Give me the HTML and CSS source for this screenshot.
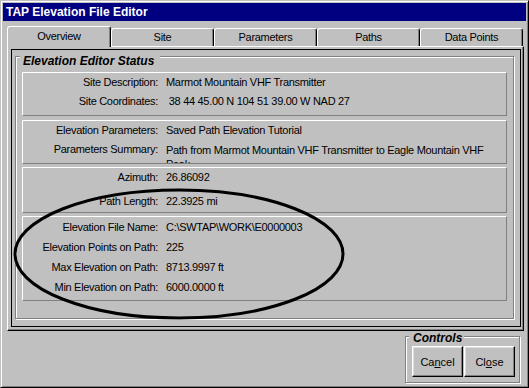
FILE: index.html
```html
<!DOCTYPE html>
<html>
<head>
<title>TAP Elevation File Editor</title>
<link rel="stylesheet" href="styles.css">
</head>
<body>
<div class="window">
  <div class="titlebar">TAP Elevation File Editor</div>

  <div class="tabs">
    <div class="tab active">Overview</div>
    <div class="tab">Site</div>
    <div class="tab">Parameters</div>
    <div class="tab">Paths</div>
    <div class="tab">Data Points</div>
  </div>

  <div class="page">
    <div class="inner">
      <div class="group status">
        <div class="caption">Elevation Editor Status</div>

        <div class="panel">
          <span class="label">Site Description:</span>
          <span class="value">Marmot Mountain VHF Transmitter</span>
          <span class="label">Site Coordinates:</span>
          <span class="value"> 38 44 45.00 N 104 51 39.00 W NAD 27</span>
        </div>

        <div class="panel p2">
          <span class="label">Elevation Parameters:</span>
          <span class="value">Saved Path Elevation Tutorial</span>
          <span class="label">Parameters Summary:</span>
          <span class="value wrap">Path from Marmot Mountain VHF Transmitter to Eagle Mountain VHF Peak</span>
        </div>

        <div class="panel p3">
          <span class="label">Azimuth:</span>
          <span class="value">26.86092</span>
          <span class="label">Path Length:</span>
          <span class="value">22.3925 mi</span>
        </div>

        <div class="panel p4">
          <span class="label">Elevation File Name:</span>
          <span class="value">C:\SWTAP\WORK\E0000003</span>
          <span class="label">Elevation Points on Path:</span>
          <span class="value">225</span>
          <span class="label">Max Elevation on Path:</span>
          <span class="value">8713.9997 ft</span>
          <span class="label">Min Elevation on Path:</span>
          <span class="value">6000.0000 ft</span>
        </div>
      </div>
    </div>
  </div>

  <div class="footer">
    <div class="group controls">
      <div class="caption">Controls</div>
      <div class="buttons">
        <button class="btn">Ca<u>n</u>cel</button>
        <button class="btn">Cl<u>o</u>se</button>
      </div>
    </div>
  </div>

  <!-- pen mark drawn over the form -->
  <svg class="mark" width="529" height="388" viewBox="0 0 529 388">
    <ellipse cx="179" cy="254" rx="164" ry="64" fill="none" stroke="#000" stroke-width="3"/>
  </svg>
</div>
</body>
</html>
```

FILE: styles.css
```css
html, body {
    margin: 0;
}

body {
    background: #c0c0c0;
    color: #000;
    font-family: "Liberation Sans", Arial, sans-serif;
    font-size: 11px;
    letter-spacing: -0.3px;
}

.window {
    position: relative;
    box-sizing: border-box;
    width: 529px;
    height: 388px;
    padding: 2px;
    border: 1px solid;
    border-color: #c0c0c0 #000 #000 #c0c0c0;
    box-shadow: inset 1px 1px #fff, inset -1px -1px #808080;
    background: #c0c0c0;
}

.titlebar {
    height: 18px;
    line-height: 18px;
    padding-left: 3px;
    background: #000080;
    color: #fff;
    font-size: 12px;
    font-weight: bold;
    letter-spacing: 0;
}

/* tab strip */
.tabs {
    display: flex;
    align-items: flex-end;
    height: 20px;
    margin-top: 5px;
    padding-left: 5px;
}

.tab {
    box-sizing: border-box;
    width: 103px;
    height: 18px;
    line-height: 17px;
    text-align: center;
    border: 1px solid #fff;
    border-right-color: #000;
    border-bottom: none;
    border-radius: 3px 3px 0 0;
    box-shadow: inset -1px 0 #808080;
}

.tab.active {
    position: relative;
    z-index: 1;
    width: 104px;
    height: 21px;
    line-height: 19px;
    margin-left: -1px;
    margin-bottom: -1px;
    background: #c0c0c0;
}

.page {
    display: flex;
    box-sizing: border-box;
    height: 285px;
    margin: 0 2px 0 4px;
    padding: 2px 2px 3px 3px;
    border: 1px solid;
    border-color: #fff #000 #000 #fff;
    box-shadow: inset -1px -1px #808080;
}

.inner {
    flex: 1;
    display: flex;
    flex-direction: column;
    border: 1px solid #000;
}

/* group boxes */
.group {
    border: 1px solid #808080;
    box-shadow: inset 1px 1px #fff, 1px 1px #fff;
}

.caption {
    width: fit-content;
    line-height: 13px;
    background: #c0c0c0;
    font-size: 12px;
    font-weight: bold;
    font-style: italic;
    letter-spacing: 0;
}

.status {
    flex: 1;
    margin: 6px 6px 7px 3px;
    padding: 0 6px;
}

.status .caption {
    margin: -2px 0 4px -2px;
    padding: 0 6px 0 3px;
}

.panel {
    display: grid;
    grid-template-columns: 135px 1fr;
    grid-auto-rows: 19px;
    column-gap: 8px;
    line-height: 19px;
    padding-bottom: 4px;
    margin-top: 3px;
    overflow: hidden;
    border: 1px solid;
    border-color: #fff #808080 #808080 #fff;
}

.status .caption + .panel {
    margin-top: 0;
}

.p2 {
    margin-top: 4px;
}

.p3 {
    row-gap: 5px;
    padding-bottom: 1px;
}

.p4 {
    grid-auto-rows: 20px;
    line-height: 20px;
    padding-bottom: 3px;
}

.label {
    text-align: right;
    white-space: nowrap;
}

.value {
    white-space: pre;
}

.value.wrap {
    white-space: normal;
    line-height: 14px;
    padding-top: 2.5px;
    padding-right: 10px;
}

/* bottom controls */
.footer {
    display: flex;
    justify-content: flex-end;
    padding: 5px 6px 0 0;
}

.controls {
    box-sizing: border-box;
    width: 115px;
    height: 47px;
    padding: 0 4px 0 6px;
}

.controls .caption {
    margin: -5px 0 1px -3px;
    padding: 0 2px 0 4px;
}

.buttons {
    display: flex;
    gap: 1px;
}

.btn {
    width: 51px;
    height: 31px;
    padding: 0;
    font: inherit;
    color: #000;
    background: #c0c0c0;
    border: 1px solid;
    border-color: #fff #000 #000 #fff;
    box-shadow: inset -1px -1px #808080, inset 1px 1px #dfdfdf;
}

.mark {
    position: absolute;
    left: -1px;
    top: -1px;
    pointer-events: none;
}
```
